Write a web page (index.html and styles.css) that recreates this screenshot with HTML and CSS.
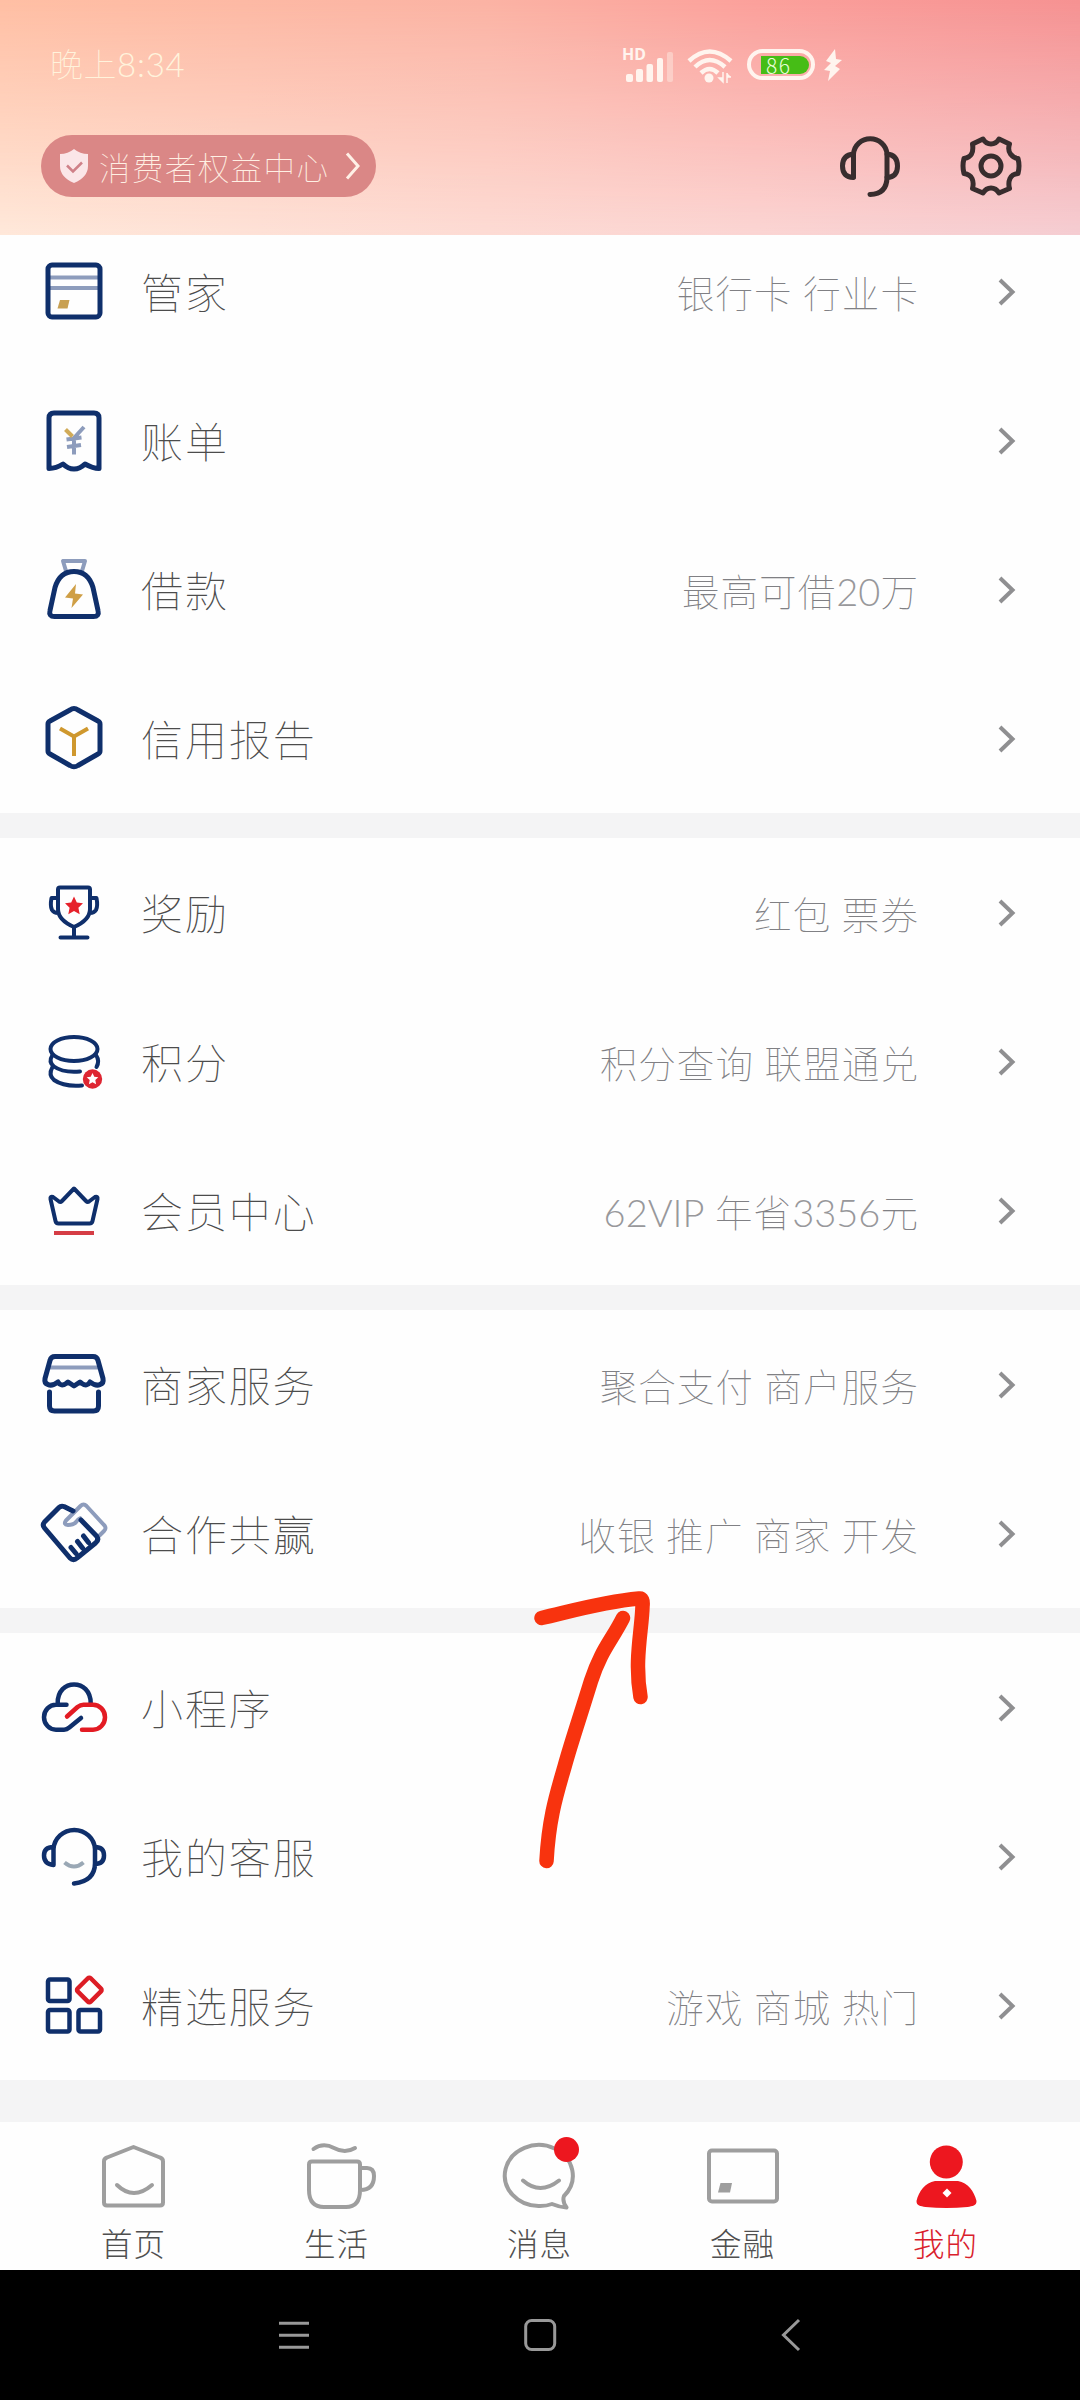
FILE: index.html
```html
<!DOCTYPE html>
<html lang="zh-CN">
<head>
<meta charset="utf-8">
<title>我的</title>
<link rel="stylesheet" href="styles.css">
</head>
<body>
<div class="screen">
  <header class="header">
    <div class="status">
      <span class="time">晚上<span class="num">8:34</span></span>
      <div class="status-icons">
        <div class="signal">
          <span class="hd">HD</span>
          <svg width="52" height="36" viewBox="0 0 52 36"><g fill="#fff4ee"><rect x="4" y="27" width="7" height="8" rx="2"/><rect x="14" y="22" width="7" height="13" rx="2"/><rect x="24.500" y="17" width="6.500" height="18" rx="2"/><rect x="35" y="11" width="6" height="24" rx="2"/><rect x="45" y="5" width="6" height="30" rx="2" opacity=".4"/></g></svg>
        </div>
        <svg class="wifi" width="46" height="36" viewBox="0 0 46 36"><g fill="none" stroke="#fff4ee" stroke-width="4.500"><path d="M2 14Q22.500-5 44 14"/><path d="M8 20Q22.500 6 38 20"/><path d="M14 26Q22.500 18 31 26"/></g><circle cx="22" cy="31" r="4.500" fill="#fff4ee"/><path d="M32 31h4v-6v10zM40 26v10v-6h4" fill="#fff4ee" stroke="#fff4ee" stroke-width="1.500"/></svg>
        <div class="battery"><span class="charge">86</span></div>
        <svg class="bolt" width="18" height="32" viewBox="0 0 18 32"><path d="M11 0L2 12l5 2-7 7 6 1-2 10L16 20l-5-3 7-6-6-1z" fill="#fff4ee"/></svg>
      </div>
    </div>
    <div class="toolbar">
      <div class="pill">
        <svg width="28" height="34" viewBox="0 0 28 34"><path d="M14 0Q20 5 28 5v12Q28 28 14 34 0 28 0 17V5Q8 5 14 0z" fill="#fbe6e8"/><path d="M7 16.500l6 6 9-9" fill="none" stroke="#cf8088" stroke-width="2.500"/></svg>
        <span class="pill-text">消费者权益中心</span>
        <svg width="16" height="28" viewBox="0 0 16 28"><path d="M2 1.500L13 14 2 26.500" fill="none" stroke="#fff0e6" stroke-width="3"/></svg>
      </div>
      <div class="tools">
        <svg width="60" height="62" viewBox="0 0 60 62"><g fill="none" stroke="#382d2e" stroke-width="5" stroke-linecap="round"><path d="M13.500 42V19a16.800 16.500 0 0 1 33.500 0v23q0 17-17 17.500"/><path d="M13.500 19Q2.500 20 2.500 31t11 11.500M47 19q10.500 1 10.500 12T47 42.500"/></g></svg>
        <svg width="62" height="62" viewBox="-31 -31 62 62"><g fill="none" stroke="#382d2e" stroke-width="5" stroke-linejoin="round"><path d="M-8-27q3 5 8 5t8-5l10.500 5q-2 6 1 10t7.500 4.500Q29 0 27 7.500q-6 .500-8 5t-.500 10L8 27q-3-5-8-5t-8 5l-10.500-4.500q1.500-6-.500-10t-8-5Q-29 0-27-7.500q5.500-1 7.500-4.500t1-10z"/><circle r="10"/></g></svg>
      </div>
    </div>
  </header>

  <main class="list">
    <section class="group">
      <div class="row"><svg class="icon" viewBox="0 0 64 64"><path class="soft" d="M6 18.500h52M6 29h52"/><rect class="navy" x="6" y="6" width="52" height="52" rx="4"/><path fill="#c8a052" d="M18 41h9.500l-2 8.500H15.500z"/></svg><span class="label">管家</span><span class="hint">银行卡 行业卡</span><svg class="chev" viewBox="0 0 17 28"><path d="M2 2l12.500 12L2 26"/></svg></div>
      <div class="row"><svg class="icon" viewBox="0 0 64 64"><path class="navy" d="M12 5h40q5 0 5 5v50.500q-6 0-14-4.500-5 5-11 5t-11-5q-7 4.500-14 4.500V10q0-5 5-5z"/><path class="soft yen" d="M42 19L32 30v16.500M24.500 31.500l15-2M25 39l14-2"/><path d="M23.500 21.500l7 7" stroke="#d1ab58" stroke-width="4"/></svg><span class="label">账单</span><span class="hint"></span><svg class="chev" viewBox="0 0 17 28"><path d="M2 2l12.500 12L2 26"/></svg></div>
      <div class="row"><svg class="icon" viewBox="0 0 64 64"><path class="soft" d="M24 14l-3-10h22l-3 10"/><path class="navy" d="M32 14.500c10 0 16 6 19 16l5 23q1.500 6-4.500 6h-39q-6 0-4.500-6l5-23c3-10 9-16 19-16z"/><path fill="#cf9f46" d="M34 27L23 40.500l8 1L29.500 51 41 37.500l-8-1z"/></svg><span class="label">借款</span><span class="hint">最高可借<span class="num">20</span>万</span><svg class="chev" viewBox="0 0 17 28"><path d="M2 2l12.500 12L2 26"/></svg></div>
      <div class="row"><svg class="icon" viewBox="0 0 64 64"><path class="navy" d="M32 2.500q2 0 4 1.500l20 11q2 1 2 3v27q0 2-2 3L36 59.500q-4 2.500-8 0L8 48q-2-1-2-3V18q0-2 2-3L28 4q2-1.500 4-1.500z"/><path d="M18 22.500l14 8 14-8M32 30v20" fill="none" stroke="#cf982e" stroke-width="4"/></svg><span class="label">信用报告</span><span class="hint"></span><svg class="chev" viewBox="0 0 17 28"><path d="M2 2l12.500 12L2 26"/></svg></div>
    </section>
    <section class="group">
      <div class="row"><svg class="icon thin" viewBox="0 0 64 64"><path class="navy" d="M18 7.500h28q2 0 2 2V29q0 11-16 18Q16 40 16 29V9.500q0-2 2-2zM16 18H9.500q-1.500 8 .500 12 2 3 6 3M48 18h6.500q1.500 8-.500 12-2 3-6 3M32 47v10M18.500 57.500h27"/><path fill="#e6212b" d="M32 16.500l2.800 6 6.200.700-4.600 4.500 1.300 6.500-5.700-3.200-5.700 3.200 1.300-6.500-4.600-4.500 6.200-.700z"/></svg><span class="label">奖励</span><span class="hint">红包 票券</span><svg class="chev" viewBox="0 0 17 28"><path d="M2 2l12.500 12L2 26"/></svg></div>
      <div class="row"><svg class="icon thin" viewBox="0 0 64 64"><g class="navy"><ellipse cx="32" cy="20" rx="23.500" ry="12"/><path d="M10.500 26Q6 33 12 37.500 21 44 38 42.500M54 26q4 6 .500 12M10.500 38Q6 46 12 51q10 7 28 5.500"/></g><circle cx="50.500" cy="50" r="9.700" fill="#de2632"/><path fill="#fff" d="M50.500 44l1.800 3.800 4 .500-3 2.800.800 4.100-3.600-2-3.600 2 .800-4.100-3-2.800 4-.500z"/></svg><span class="label">积分</span><span class="hint">积分查询 联盟通兑</span><svg class="chev" viewBox="0 0 17 28"><path d="M2 2l12.500 12L2 26"/></svg></div>
      <div class="row"><svg class="icon thin" viewBox="0 0 64 64"><path class="navy" d="M32 10.500L44 23q1.500 1.500 3 .500l6-4.500q3-1 2.500 2l-5 22q-.500 2.500-3 2.500h-31q-2.500 0-3-2.500l-5-22q-.500-3 2.500-2l6 4.500q1.500 1 3-.500z"/><path d="M12 55h40" stroke="#d53d45" stroke-width="4"/></svg><span class="label">会员中心</span><span class="hint"><span class="num">62VIP</span> 年省<span class="num">3356</span>元</span><svg class="chev" viewBox="0 0 17 28"><path d="M2 2l12.500 12L2 26"/></svg></div>
    </section>
    <section class="group">
      <div class="row"><svg class="icon" viewBox="0 0 64 64"><path class="soft" d="M6 15.500h52"/><path class="navy" d="M13 4.500h38q4 0 5 4l5 18q1 5-3 6-4 2-10-2.500-3 5-8 1.500-2-1.500-2-1.500l-6 4-6-4-2 1.500q-5 3.500-8-1.500-6 4.500-10 2.500-4-1-3-6l5-18q1-4 5-4zM7.500 40v14q0 5 5 5h39q5 0 5-5V40"/></svg><span class="label">商家服务</span><span class="hint">聚合支付 商户服务</span><svg class="chev" viewBox="0 0 17 28"><path d="M2 2l12.500 12L2 26"/></svg></div>
      <div class="row"><svg class="icon" viewBox="0 0 64 64"><path class="soft" d="M57 35l5-5q3-3 0-6L44.500 5q-3-3-6 0L24 19.500q-3 4 2 4.500 6 0 8.500-3.500 2-3 5-3.500"/><path class="navy" d="M31 10l-9-4.500q-3-1-5 1L2.500 21Q0 24 2.500 27L28 57q3.500 3.500 7 0l18.500-15q4-3 1-7L39 19M29 46.500l5 6M35.500 40.500l5 6.500M41.500 35l5 6.500"/></svg><span class="label">合作共赢</span><span class="hint">收银 推广 商家 开发</span><svg class="chev" viewBox="0 0 17 28"><path d="M2 2l12.500 12L2 26"/></svg></div>
    </section>
    <section class="group">
      <div class="row"><svg class="icon mid" viewBox="0 0 64 64"><path class="navy" d="M15.700 28.500C15 3 49 3 48.700 28.500M24.500 29.700H14A12 12.500 0 0 0 14 54.700h8q3 0 5-2L39 43"/><path d="M25 41.500l10.500-9.500q3-2.300 6-2.300H51a12 12.500 0 0 1 0 25H40" fill="none" stroke="#e31b23" stroke-width="4.500" stroke-linecap="round"/></svg><span class="label">小程序</span><span class="hint"></span><svg class="chev" viewBox="0 0 17 28"><path d="M2 2l12.500 12L2 26"/></svg></div>
      <div class="row"><svg class="icon mid" viewBox="0 0 64 64"><path class="navy" d="M11.500 41V25a20.800 20.500 0 0 1 41.500 0v14q0 18-21 20.500M11.500 23Q2 23 2 31.500T11.500 41M53 23q9 0 9 8.500T53 40"/><path d="M22.500 38.500q9.500 8 19 0" stroke="#9aa8b5" fill="none" stroke-width="4"/></svg><span class="label">我的客服</span><span class="hint"></span><svg class="chev" viewBox="0 0 17 28"><path d="M2 2l12.500 12L2 26"/></svg></div>
      <div class="row"><svg class="icon mid" viewBox="0 0 64 64"><g class="navy"><rect x="6" y="6.500" width="21.500" height="21.500" rx="2"/><rect x="6" y="37" width="21.500" height="21.500" rx="2"/><rect x="36.500" y="37" width="21.500" height="21.500" rx="2"/></g><rect x="38" y="7.700" width="18.500" height="18.500" rx="2" transform="rotate(45 47.300 17)" fill="none" stroke="#dc1d25" stroke-width="4.500"/></svg><span class="label">精选服务</span><span class="hint">游戏 商城 热门</span><svg class="chev" viewBox="0 0 17 28"><path d="M2 2l12.500 12L2 26"/></svg></div>
    </section>
  </main>

  <nav class="tabs">
    <div class="tab"><svg viewBox="0 0 72 72"><path d="M36.500 7L63 17.500q3 1 3 4v41q0 3-3 3H10q-3 0-3-3v-41q0-3 3-4zM20 45q16.500 16 35 0"/></svg><span>首页</span></div>
    <div class="tab"><svg viewBox="0 0 72 72"><path d="M13.500 9Q23 2 34 8t21 0M12 21.500h45q3 0 3 3V50q0 17-14 17H24Q9 67 9 50V24.500q0-3 3-3zM60.500 28H67q7 0 7 8 0 14-13.500 14"/></svg><span>生活</span></div>
    <div class="tab"><svg viewBox="0 0 72 72"><path d="M49 64q-5 2-12 2A34 30.500 0 1 1 61 56q-2 5 2.500 11.500Q56 67 49 64zM20 40.500q17 15 36 0"/><circle cx="63.500" cy="9.500" r="12.500" class="dot"/></svg><span>消息</span></div>
    <div class="tab"><svg viewBox="0 0 72 72"><rect x="3" y="10.500" width="68" height="51" rx="3"/><path d="M14.500 43H26l-2 9.500H12z" class="chip"/></svg><span>金融</span></div>
    <div class="tab active"><svg viewBox="0 0 72 72"><circle cx="37.300" cy="22" r="16.500" class="dot"/><path class="dot" d="M26 41h23c10 2 16 10 18.500 20 0 5-4 5-9 6q-21 2-42 0c-5-1-9-1-9-6C10 51 16 43 26 41z"/><path d="M38 48.500l4.500 4.500-4.500 4.500-4.500-4.500z" class="hole"/></svg><span>我的</span></div>
  </nav>

  <footer class="sysnav">
    <svg width="32" height="34" viewBox="0 0 32 34"><path d="M1 5.300h30M1 17.300h30M1 29.300h30"/></svg>
    <svg width="32" height="34" viewBox="0 0 32 34"><rect x="1.700" y="2.500" width="29" height="29" rx="6"/></svg>
    <svg width="20" height="34" viewBox="0 0 20 34"><path d="M18 2L2.500 17 18 32"/></svg>
  </footer>

  <svg class="annotation" width="130" height="300" viewBox="530 1580 130 300"><path d="M541.500 1618C565 1613 600 1602 639 1598.500Q643.500 1598 642.500 1606C642 1630 634 1660 640.500 1697M623 1618C612 1640 601 1650 591 1681C579 1720 572 1740 565 1765C558 1790 549 1815 546.500 1861"/></svg>
</div>
</body>
</html>
```
FILE: styles.css
```css
* { box-sizing: border-box; }
body { margin: 0; }
svg { display: block; overflow: visible; flex: none; }

.screen {
  position: relative;
  width: 1080px;
  height: 2400px;
  overflow: hidden;
  background: #f4f4f5;
  font-family: "Noto Sans CJK SC", "Noto Sans", sans-serif;
  display: flex;
  flex-direction: column;
}
.num {
  font-family: Lato, sans-serif;
  font-weight: 300;
  letter-spacing: 0;
}

/* Header */
.header {
  position: relative;
  z-index: 1;
  flex: none;
  height: 235px;
  background: linear-gradient(to right, #ffbfa4, #fbb3a4 45%, #fba09b 70%, #f69292);
}
.header::before {
  content: "";
  position: absolute;
  inset: 0;
  background: linear-gradient(to right, #ffe8da, #fddbd4 45%, #fbd5d3 70%, #f5cdd2);
  mask-image: linear-gradient(to bottom, transparent, #000);
}
.status {
  position: relative;
  display: flex;
  align-items: center;
  height: 130px;
  padding-left: 50px;
}
.time {
  width: 572px;
  margin-top: -4px;
  font-size: 33px;
  font-weight: 100;
  letter-spacing: 0.500px;
  color: #fff3dc;
}
.time .num { letter-spacing: 0.800px; }
.status-icons { display: flex; align-items: center; margin-top: -1px; }
.signal { position: relative; width: 65px; height: 36px; }
.hd {
  position: absolute;
  left: 0;
  top: -1px;
  font: 700 16px/16px "Noto Sans", sans-serif;
  color: #fff4ee;
}
.battery {
  width: 68px;
  height: 31px;
  margin: 0 9px 0 14px;
  padding: 2.500px 2px 2.500px 10px;
  border: 4px solid #fff4ee;
  border-radius: 16px;
}
.charge {
  display: block;
  width: 48px;
  height: 18px;
  padding-left: 5px;
  background: #46bd16;
  border-radius: 0 9px 9px 0;
  font-size: 21px;
  font-weight: 200;
  line-height: 19px;
  letter-spacing: 1.500px;
  color: #e9ffd8;
}
.toolbar {
  position: relative;
  display: flex;
  align-items: center;
  justify-content: space-between;
  margin-top: 5px;
  padding: 0 58px 0 41px;
}
.pill {
  display: flex;
  align-items: center;
  width: 335px;
  height: 62px;
  padding-left: 19px;
  border-radius: 31px;
  background: #da8786;
}
.pill-text {
  width: 246px;
  margin-left: 11px;
  font-size: 31.500px;
  font-weight: 100;
  letter-spacing: 1.400px;
  white-space: nowrap;
  color: #fff0e4;
}
.tools { display: flex; gap: 60px; }

/* Service list; the first group slides under the header */
.list {
  flex: none;
  display: flex;
  flex-direction: column;
  gap: 25px;
  margin-top: -18px;
}
.group { background: #fefefe; }
.row {
  display: flex;
  align-items: center;
  height: 149px;
  padding: 0 65px 0 42px;
}
.icon { width: 64px; height: 64px; margin-top: -2px; }
.navy {
  fill: none;
  stroke: #0f2f6b;
  stroke-width: 5;
  stroke-linejoin: round;
  stroke-linecap: round;
}
.thin .navy { stroke-width: 4; }
.mid .navy { stroke-width: 4.500; }
.soft {
  fill: none;
  stroke: #8d9cbc;
  stroke-width: 4;
  stroke-linejoin: round;
}
.label {
  margin: -3px 0 0 35px;
  font-size: 42px;
  font-weight: 100;
  letter-spacing: 1.900px;
  color: #4c4c4c;
}
.hint {
  flex: 1;
  margin: -1px 79px 0 0;
  text-align: right;
  font-size: 37.500px;
  font-weight: 100;
  letter-spacing: 1.100px;
  word-spacing: 1.200px;
  color: #808084;
}
.hint .num { font-size: 38px; color: #98989b; }
.chev { width: 17px; height: 28px; }
.chev path { fill: none; stroke: #8f8f91; stroke-width: 4; }

/* Bottom tabs */
.tabs {
  flex: none;
  display: grid;
  grid-template-columns: repeat(5, 203px);
  height: 148px;
  margin-top: 42px;
  padding: 18px 0 0 32px;
  background: #fefefe;
}
.tab {
  display: flex;
  flex-direction: column;
  align-items: center;
  font-size: 31.500px;
  font-weight: 300;
  letter-spacing: 1px;
  line-height: 40px;
  color: #4f4f4f;
}
.tab svg {
  width: 72px;
  height: 72px;
  margin: 0 1px 10px 0;
  fill: none;
  stroke: #9e9e9e;
  stroke-width: 4;
  stroke-linecap: round;
  stroke-linejoin: round;
}
.tab .dot { fill: #ed171f; stroke: none; }
.tab .chip { fill: #9e9e9e; stroke: none; }
.tab .hole { fill: #fff; stroke: none; }
.active { color: #d9202c; }

/* System navigation */
.sysnav {
  flex: 1;
  display: grid;
  grid-template-columns: 246px 257px auto;
  align-items: center;
  padding-left: 278px;
  background: #000;
}
.sysnav svg { fill: none; stroke: #999; stroke-width: 3; }

/* Hand-drawn arrow over the list */
.annotation { position: absolute; z-index: 2; left: 530px; top: 1580px; }
.annotation path {
  fill: none;
  stroke: #f8330e;
  stroke-width: 14.500;
  stroke-linecap: round;
  stroke-linejoin: round;
}
```
